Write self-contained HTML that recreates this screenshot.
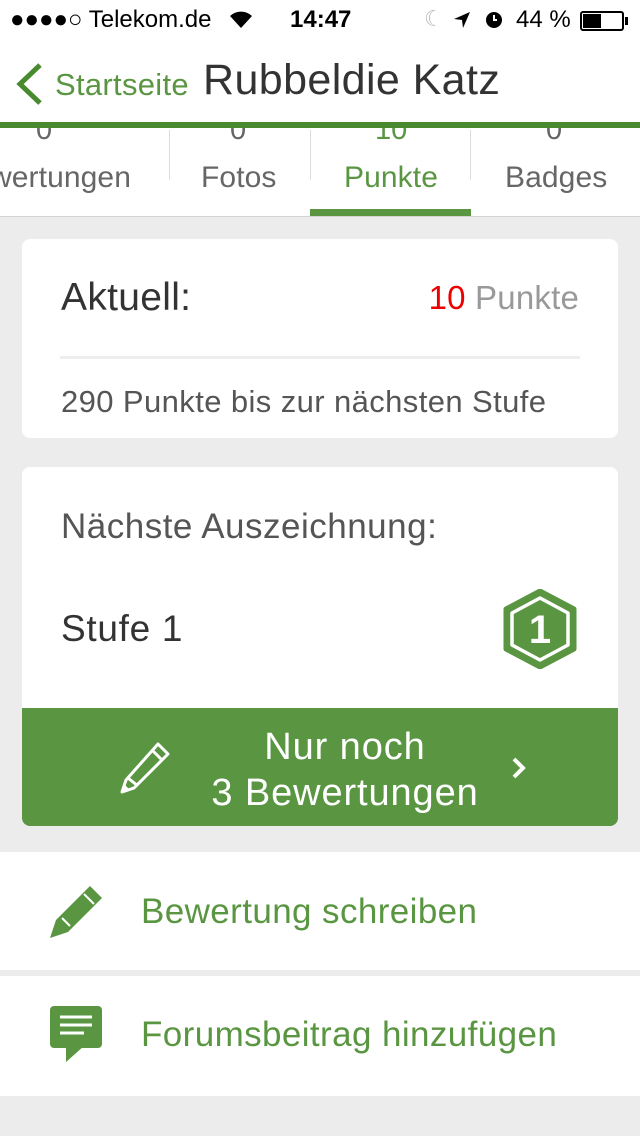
<!DOCTYPE html>
<html><head><meta charset="utf-8"><style>
*{margin:0;padding:0;box-sizing:border-box}
body{width:640px;height:1136px;background:#ececec;font-family:"Liberation Sans",sans-serif;position:relative;overflow:hidden}
.a{position:absolute;white-space:nowrap}
</style></head><body>
<div class="a" style="left:0;top:0;width:640px;height:216px;background:#fff"></div>
<!-- status -->
<div class="a" style="left:10px;top:6px;font-size:24px;color:#000">●●●●○ Telekom.de</div>
<svg class="a" style="left:228px;top:10px" width="26" height="20" viewBox="0 0 26 20"><path d="M13 18 L2 6 A16 16 0 0 1 24 6Z" fill="#000"/></svg>
<div class="a" style="left:290px;top:6px;font-size:24px;font-weight:bold">14:47</div>
<div class="a" style="left:424px;top:6px;font-size:22px;color:#bbb">☾</div>
<svg class="a" style="left:452px;top:10px" width="20" height="20"><path d="M18 2 L2 9 L10 10 L11 18Z" fill="#000"/></svg>
<svg class="a" style="left:483px;top:8px" width="22" height="22"><circle cx="11" cy="12" r="8" fill="#000"/><path d="M11 7v5h3" stroke="#fff" stroke-width="2" fill="none"/></svg>
<div class="a" style="left:516px;top:6px;font-size:24px">44 %</div>
<div class="a" style="left:580px;top:11px;width:44px;height:20px;border:2px solid #000;border-radius:3px"><div style="width:18px;height:14px;margin:1px;background:#000"></div></div>
<div class="a" style="left:625px;top:17px;width:3px;height:8px;background:#000"></div>
<!-- nav -->
<svg class="a" style="left:14px;top:62px" width="30" height="44"><path d="M26 3 L6 22 L26 41" stroke="#4a8a2e" stroke-width="5" fill="none"/></svg>
<div class="a" style="left:55px;top:67px;font-size:31px;letter-spacing:0.3px;color:#5a9642">Startseite</div>
<div class="a" style="left:203px;top:56px;font-size:43px;letter-spacing:0.4px;color:#333">Rubbeldie Katz</div>
<div class="a" style="left:0;top:122px;width:640px;height:6px;background:#4a8a2e"></div>
<!-- tabs -->
<div class="a" style="left:0;top:128px;width:640px;height:20px;overflow:hidden">
<div class="a" style="left:36px;top:-14px;font-size:29px;color:#666">0</div>
<div class="a" style="left:230px;top:-14px;font-size:29px;color:#666">0</div>
<div class="a" style="left:375px;top:-14px;font-size:29px;color:#5a9642">10</div>
<div class="a" style="left:546px;top:-14px;font-size:29px;color:#666">0</div>
</div>
<div class="a" style="left:169px;top:130px;width:1px;height:50px;background:#ddd"></div>
<div class="a" style="left:310px;top:130px;width:1px;height:50px;background:#ddd"></div>
<div class="a" style="left:470px;top:130px;width:1px;height:50px;background:#ddd"></div>
<div class="a" style="left:-10px;top:161px;font-size:30px;letter-spacing:0.1px;color:#666">wertungen</div>
<div class="a" style="left:201px;top:161px;font-size:30px;letter-spacing:0.1px;color:#666">Fotos</div>
<div class="a" style="left:344px;top:161px;font-size:30px;letter-spacing:0.1px;color:#5a9642">Punkte</div>
<div class="a" style="left:505px;top:161px;font-size:30px;letter-spacing:0.1px;color:#666">Badges</div>
<div class="a" style="left:310px;top:209px;width:161px;height:7px;background:#5a9642"></div>
<div class="a" style="left:0;top:216px;width:640px;height:1px;background:#d4d4d4"></div>
<!-- card1 -->
<div class="a" style="left:22px;top:239px;width:596px;height:199px;background:#fff;border-radius:8px"></div>
<div class="a" style="left:61px;top:276px;font-size:39px;letter-spacing:0.3px;color:#333">Aktuell:</div>
<div class="a" style="right:61px;top:279px;font-size:33px;letter-spacing:0.2px;color:#999"><span style="color:#e00">10</span> Punkte</div>
<div class="a" style="left:60px;top:356px;width:520px;height:3px;background:#eee"></div>
<div class="a" style="left:61px;top:384px;font-size:31px;letter-spacing:0.4px;color:#555">290 Punkte bis zur nächsten Stufe</div>
<!-- card2 -->
<div class="a" style="left:22px;top:467px;width:596px;height:359px;background:#fff;border-radius:8px;overflow:hidden">
<div class="a" style="left:0;top:241px;width:596px;height:118px;background:#5a9642"></div>
</div>
<div class="a" style="left:61px;top:507px;font-size:35px;letter-spacing:0.5px;color:#555">Nächste Auszeichnung:</div>
<div class="a" style="left:61px;top:608px;font-size:37px;letter-spacing:0.7px;color:#333">Stufe 1</div>
<svg class="a" style="left:502px;top:589px" width="76" height="80" viewBox="0 0 76 80"><path d="M38 2 L72 20 L72 60 L38 78 L4 60 L4 20Z" fill="#5a9642" stroke="#5a9642" stroke-width="5" stroke-linejoin="round"/><path d="M38 9 L66 24 L66 56 L38 71 L10 56 L10 24Z" fill="#5a9642" stroke="#fff" stroke-width="3.5" stroke-linejoin="round"/><text x="38" y="54" text-anchor="middle" font-family="Liberation Sans" font-weight="bold" font-size="40" fill="#fff">1</text></svg>
<div class="a" style="left:170px;top:724px;width:350px;text-align:center;font-size:38px;letter-spacing:0.9px;color:#fff;line-height:46px">Nur noch<br>3 Bewertungen</div>
<svg class="a" style="left:120px;top:740px" width="52" height="54" viewBox="0 0 52 54"><path d="M38 4 L48 14 L14 48 L2 52 L6 40Z" fill="none" stroke="#fff" stroke-width="3" stroke-linejoin="round"/><path d="M32 10 L42 20 M8 38 L18 46" stroke="#fff" stroke-width="3"/><path d="M2 52 L4 44 L10 50Z" fill="#fff"/></svg>
<svg class="a" style="left:510px;top:756px" width="18" height="24"><path d="M4 3 L13 12 L4 21" stroke="#fff" stroke-width="4" fill="none"/></svg>
<!-- list -->
<div class="a" style="left:0;top:852px;width:640px;height:118px;background:#fff"></div>
<div class="a" style="left:0;top:976px;width:640px;height:120px;background:#fff"></div>
<svg class="a" style="left:48px;top:884px" width="56" height="56" viewBox="0 0 56 56"><path d="M42 2 L54 14 L20 48 L2 54 L8 36Z" fill="#5a9642"/><path d="M36 10 L46 20 M14 34 L22 42" stroke="#fff" stroke-width="2"/></svg>
<div class="a" style="left:141px;top:892px;font-size:35px;letter-spacing:0.4px;color:#5a9642">Bewertung schreiben</div>
<svg class="a" style="left:50px;top:1006px" width="52" height="56" viewBox="0 0 52 56"><rect x="0" y="0" width="52" height="42" rx="4" fill="#5a9642"/><path d="M16 40 L16 56 L34 40Z" fill="#5a9642"/><path d="M10 11h32M10 19h32M10 27h24" stroke="#fff" stroke-width="3"/></svg>
<div class="a" style="left:141px;top:1015px;font-size:35px;letter-spacing:0.4px;color:#5a9642">Forumsbeitrag hinzufügen</div>
</body></html>
